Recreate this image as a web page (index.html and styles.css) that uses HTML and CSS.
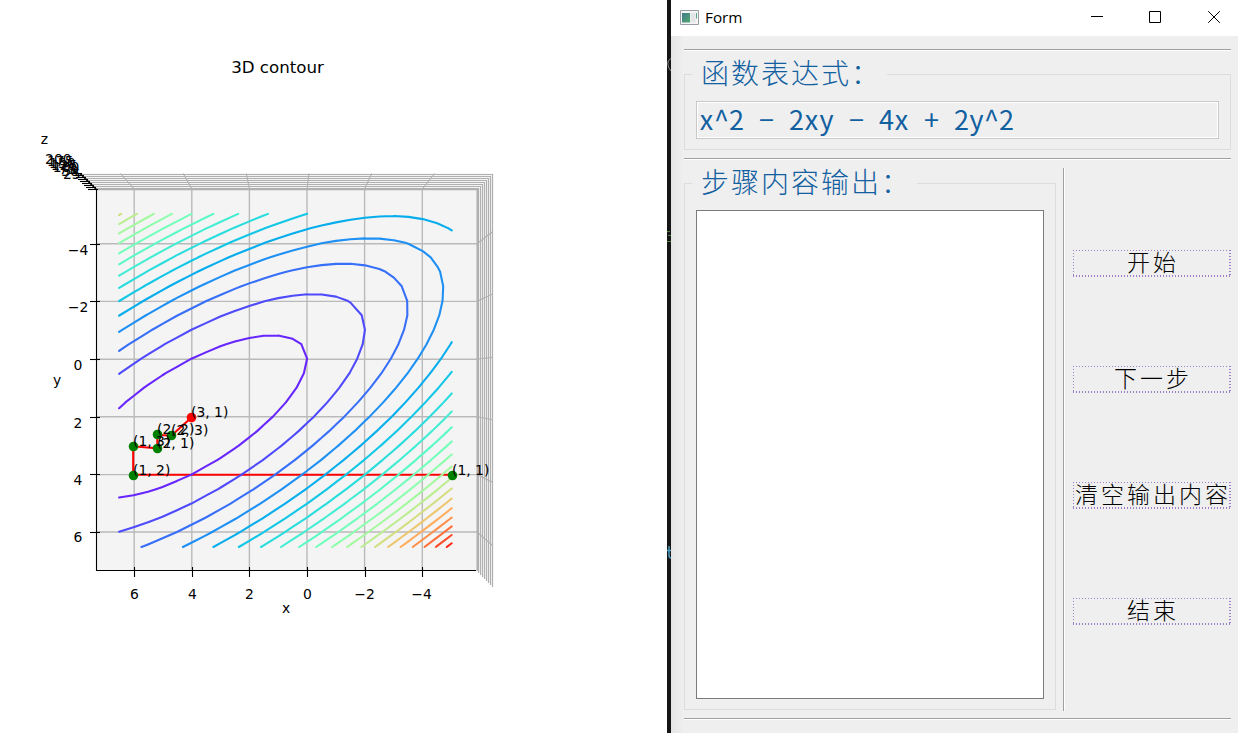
FILE: index.html
```html
<!DOCTYPE html>
<html lang="zh-CN">
<head>
<meta charset="utf-8">
<title>Form</title>
<link rel="stylesheet" href="styles.css">
</head>
<body>
<main class="desktop">
  <section class="figure">
    <svg class="plot" width="667" height="733" viewBox="0 0 667 733">
      <path class="pane" d="M80 173.500H493.500V587L476.500 570.500H96.500V189.500Z"/>
      <g id="grid" class="grid"></g>
      <path class="route" d="M452.500 474.800H133.200V446.300L157.300 448.300V435L171.500 435.500L191.500 417.500"/>
      <g id="contours" class="contours"></g>
      <g id="axes" class="axes"></g>
      <g class="dots">
        <circle cx="452.500" cy="475.500" r="4.800"/><circle cx="133.500" cy="475.500" r="4.800"/>
        <circle cx="133.500" cy="446.500" r="4.800"/><circle cx="157.500" cy="448.500" r="4.800"/>
        <circle cx="157.500" cy="434.500" r="4.800"/><circle cx="171.500" cy="435.500" r="4.800"/>
        <circle class="last" cx="191.500" cy="417.500" r="4.800"/>
      </g>
      <g class="notes">
        <text x="452" y="475">(1, 1)</text><text x="133" y="475">(1, 2)</text>
        <text x="133" y="446">(1, 3)</text><text x="157" y="448">(2, 1)</text>
        <text x="157" y="434">(2, 2)</text><text x="171" y="435">(2, 3)</text>
        <text x="191" y="417">(3, 1)</text>
      </g>
      <g id="labels" class="labels">
        <text x="286" y="613">x</text><text x="57" y="385">y</text><text x="44.500" y="144">z</text>
        <text class="title" x="277.500" y="73">3D contour</text>
      </g>
    </svg>
  </section>
  <svg class="edge" width="4" height="733" viewBox="0 0 4 733">
    <path stroke="#8a8a8a" d="M4 58.500Q.5 60 .8 64T4 71"/>
    <path stroke="#4f7a3c" d="M0 231.500h3M1 235.500h3M0 241.500h4"/>
    <path stroke="#4a9cc0" stroke-width="1.500" d="M0 550.500h4M2 546v9q0 3 2 3"/>
  </svg>
  <section class="window">
    <header class="titlebar">
      <svg class="appicon" width="19" height="15" viewBox="0 0 19 15">
        <defs><linearGradient id="g" x2="1" y2="1"><stop offset="0" stop-color="#44778f"/><stop offset="1" stop-color="#4fab6b"/></linearGradient></defs>
        <path fill="#f4f4f4" stroke="#989da3" d="M.5.5h18v14H.5z"/><path fill="url(#g)" d="M2 3h8v9.500H2z"/>
        <path fill="#e4e5e7" d="M10.500 3h5v9.500h-5z"/><path fill="#5aa583" d="M16 3h1v5.500h-1z"/>
      </svg>
      <span class="caption">Form</span>
      <svg class="controls" width="131" height="14" viewBox="0 0 131 14">
        <path d="M0 6.500h12M58.500 1.500h11v11h-11z"/><path class="close" d="M117.200 1.200l11.600 11.600M128.800 1.200L117.200 12.800"/>
      </svg>
    </header>
    <div class="form">
      <div class="rule"></div>
      <fieldset class="group expression">
        <legend>函数表达式：</legend>
        <div class="field"><svg width="330" height="36"><text id="formula" y="28">x^2 − 2xy − 4x + 2y^2</text></svg></div>
      </fieldset>
      <div class="rule"></div>
      <div class="lower">
        <fieldset class="group output">
          <legend>步骤内容输出：</legend>
          <div class="console"></div>
        </fieldset>
        <div class="divider"></div>
        <div class="actions">
          <button>开始</button><button>下一步</button><button>清空输出内容</button><button>结束</button>
        </div>
      </div>
      <div class="rule"></div>
    </div>
  </section>
</main>
<script src="plot.js"></script>
</body>
</html>
```

FILE: styles.css
```css
* { box-sizing: border-box; }
body { margin: 0; background: #fff; overflow: hidden; }
.desktop { display: flex; width: 1238px; height: 733px; }
.figure { width: 667px; background: #fff; }
.plot { display: block; font-family: "DejaVu Sans", sans-serif; font-size: 13.9px; }
.pane { fill: #f4f4f4; }
.grid path { fill: none; stroke: #b0b0b0; stroke-width: 1.1; }
.grid .floor { stroke: #bababa; stroke-width: 1.4; }
.grid .base { stroke-width: 2; }
.route { fill: none; stroke: #f00; stroke-width: 2.1; }
.contours path { fill: none; stroke-width: 2.08; stroke-linecap: round; }
.axes path { fill: none; stroke: #000; stroke-width: 1.1; }
.dots { fill: #008000; }
.dots .last { fill: #f00; }
.labels { text-anchor: middle; }
.title { font-size: 16.67px; }
.edge { display: block; width: 4px; background: #151515; fill: none; }
.window { width: 567px; display: flex; flex-direction: column; background: linear-gradient(90deg, #e5e5e5, #efefef 13px); }
.titlebar { height: 36px; display: flex; align-items: center; padding: 0 16px 2px 9px; background: #fff; }
.caption { flex: 1; margin-left: 6px; font: 15.3px/20px "Open Sans", sans-serif; color: #000; }
.controls { fill: none; stroke: #000; stroke-width: 1; }
.form { height: 697px; padding: 13px 7px 0 13px; }
.rule { height: 2px; border-top: 1px solid #a0a0a0; border-bottom: 1px solid #fff; }
.group { margin: 0; min-width: 0; border: 1px solid #dcdcdc; padding: 0 11px; }
.group legend { margin-left: -4px; padding: 0 0 0 9px; height: 38px; font: 300 28px/35px "Noto Sans CJK SC", sans-serif; letter-spacing: 2px; color: #12609f; white-space: nowrap; }
.expression { height: 95px; margin-top: 4px; margin-bottom: 8px; }
.expression legend { width: 195px; }
.field { height: 38px; margin-top: 8px; border: 1px solid #c8c8c8; box-shadow: inset 0 0 0 1px #fff; }
.field svg { display: block; overflow: visible; font: 27px "Noto Sans CJK SC", sans-serif; fill: #12609f; text-anchor: middle; }
.lower { display: flex; height: 551px; margin: 4px 0 3px; }
.output { width: 372px; height: 546px; }
.output legend { width: 225px; }
.console { height: 489px; margin-top: 8px; border: 1px solid #7a7a7a; background: #fff; }
.divider { width: 2px; height: 543px; margin: 4px 8px 0 7px; border-left: 1px solid #a0a0a0; border-right: 1px solid #fff; }
.actions { flex: 1; display: flex; flex-direction: column; gap: 89px; padding-top: 86px; }
.actions button {
  height: 27px; padding: 0 0 5px; border: 0; white-space: nowrap; color: #000;
  font: 300 23px/22px "Noto Sans CJK SC", sans-serif; letter-spacing: 3px; text-indent: 2px;
  background:
    repeating-linear-gradient(90deg, #9a7fc6 0 1px, transparent 1px 3px) top / 100% 1px no-repeat,
    repeating-linear-gradient(90deg, #9a7fc6 0 1px, transparent 1px 3px) bottom / 100% 2px no-repeat,
    repeating-linear-gradient(180deg, #9a7fc6 0 1px, transparent 1px 3px) left / 1px 100% no-repeat,
    repeating-linear-gradient(180deg, #9a7fc6 0 1px, transparent 1px 3px) right / 2px 100% no-repeat;
}
```

FILE: plot.js
```js
const NS = 'http://www.w3.org/2000/svg';
const $ = id => document.getElementById(id);
function path(parent, d, cls, stroke) {
  const p = document.createElementNS(NS, 'path');
  p.setAttribute('d', d);
  if (cls) p.setAttribute('class', cls);
  if (stroke) p.style.stroke = stroke;
  parent.appendChild(p);
}
function label(x, y, s) {
  const t = document.createElementNS(NS, 'text');
  t.setAttribute('x', x);
  t.setAttribute('y', y);
  t.textContent = s;
  $('labels').appendChild(t);
}

// Floor grid, continued up the back and side walls
const gx = [134.2, 191.8, 249.4, 307, 364.6, 422.3];
const wx = [120.5, 183.3, 246.3, 309, 371.7, 434.7];
const gy = [243.8, 301.4, 359.2, 416.8, 474.6, 532];
const wy = [231.7, 294, 357.3, 419.7, 482.3, 545.3];
gx.forEach((x, i) => {
  path($('grid'), `M${x} 189V570`, 'floor');
  path($('grid'), `M${x} 189L${wx[i]} 173.500`);
});
gy.forEach((y, i) => {
  path($('grid'), `M97 ${y}H477`, 'floor');
  path($('grid'), `M477 ${y}L492.500 ${wy[i]}`);
});
for (let i = 0; i < 9; i++) {
  const k = i * 2;
  const x = i ? 476.5 + k : 477.5;
  path($('grid'), `M${96 - k} ${(i ? 190.5 : 189.3) - k}H${x}V${571 + k}`, i ? '' : 'base');
}

// Axes and ticks
path($('axes'), 'M96.500 189.500V570.500H476M96.500 189.500L80 173.500');
const ticksX = [134.5, 192.5, 249.5, 307.5, 365.5, 422.5];
const ticksY = [244.5, 301.5, 359.5, 417.5, 474.5, 532.5];
const textY = [255, 312, 370, 428, 485, 542];
['6', '4', '2', '0', '−2', '−4'].forEach((s, i) => {
  path($('axes'), `M${ticksX[i]} 567V577`);
  label(ticksX[i] - (i > 3 ? 1 : 0), 599, s);
});
['−4', '−2', '0', '2', '4', '6'].forEach((s, i) => {
  path($('axes'), `M90 ${ticksY[i]}H100`);
  label(78, textY[i], s);
});
for (let i = 0; i < 9; i++) {
  path($('axes'), `M${88 - 2 * i} ${189.5 - 2 * i}h10`);
  if (i) label(73.8 - 1.93 * i, 180.6 - 2.07 * i, i * 25);
}

// Contours of x² − 2xy − 4x + 2y² on a half-unit grid
const f = (x, y) => x * x - 2 * x * y - 4 * x + 2 * y * y;
for (let level = 0; level < 200; level += 10) {
  let d = '';
  for (let x = -5; x < 6.5; x += 0.5) {
    for (let y = -5; y < 6.5; y += 0.5) {
      const c = [[x, y], [x + 0.5, y], [x + 0.5, y + 0.5], [x, y + 0.5]];
      const hits = [];
      for (let k = 0; k < 4; k++) {
        const a = c[k], b = c[(k + 1) % 4];
        const fa = f(...a) - level, fb = f(...b) - level;
        if ((fa > 0) !== (fb > 0)) {
          const t = fa / (fa - fb);
          const px = a[0] + t * (b[0] - a[0]), py = a[1] + t * (b[1] - a[1]);
          hits.push((307.1 - px * 28.92).toFixed(2) + ' ' + (358.7 + py * 28.97).toFixed(2));
        }
      }
      for (let k = 0; k + 1 < hits.length; k += 2) d += `M${hits[k]}L${hits[k + 1]}`;
    }
  }
  const v = (level + 10) / 210;
  const rgb = [Math.min(1, Math.abs(2 * v - 0.5)), Math.sin(Math.PI * v), Math.cos(Math.PI * v / 2)];
  path($('contours'), d, '', `rgb(${rgb.map(n => Math.round(n * 255)).join(',')})`);
}

// Fixed-pitch formula
const formula = $('formula');
formula.setAttribute('x', [...formula.textContent].map((c, i) => 9.5 + i * 15).join(' '));
```
